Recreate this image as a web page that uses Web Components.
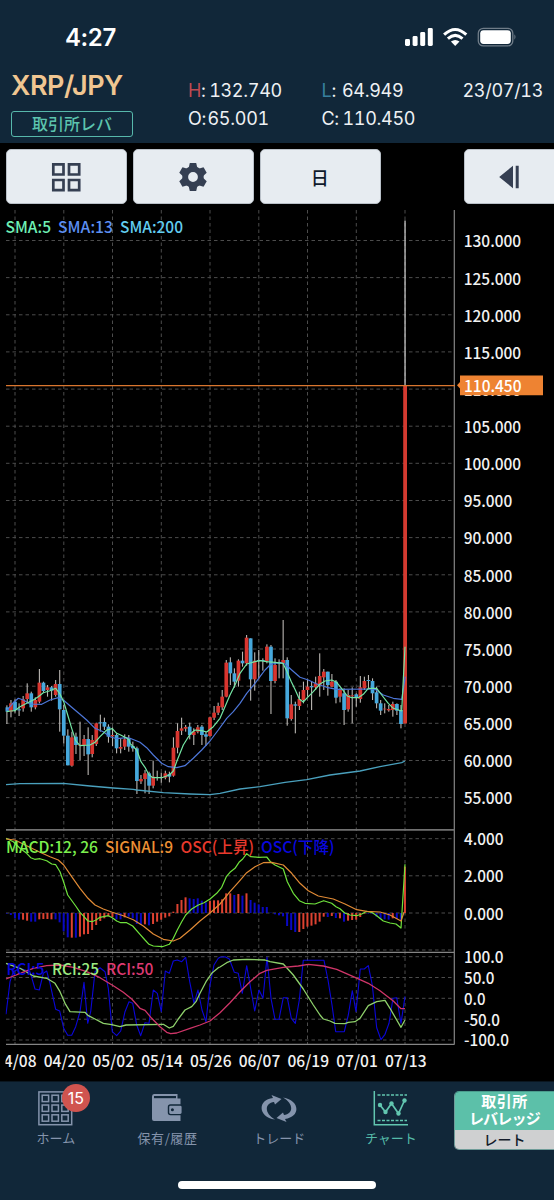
<!DOCTYPE html>
<html lang="ja">
<head>
<meta charset="utf-8">
<title>XRP/JPY</title>
<style>
  html, body { margin: 0; background: #000; }
  body { width: 554px; height: 1200px; overflow: hidden; font-family: Inter, "Noto Sans CJK JP", sans-serif; }
</style>
</head>
<body>
<trade-app></trade-app>

<script>
class StatusBar extends HTMLElement {
  constructor() {
    super();
    this.attachShadow({ mode: 'open' });
    this.shadowRoot.innerHTML = `
      <style>
        :host { display: flex; justify-content: space-between; align-items: center; height: 74px; padding: 0 37px 0 65px; box-sizing: border-box; color: #fff; }
        .time { font-size: 24px; font-weight: 600; line-height: 28px; letter-spacing: -0.4px; padding-top: 2px; }
        .icons { display: flex; align-items: center; }
        svg { display: block; }
      </style>
      <span class="time"><slot></slot></span>
      <span class="icons">
        <svg width="112" height="22" viewBox="0 0 112 22">
          <g fill="#fff">
            <rect x="0" y="13" width="5" height="7" rx="1.4"/>
            <rect x="7.6" y="10" width="5" height="10" rx="1.4"/>
            <rect x="15.2" y="6" width="5" height="14" rx="1.4"/>
            <rect x="22.8" y="2" width="5" height="18" rx="1.4"/>
            <path d="M50.2 20 L45.9 15.6 Q50.2 12.4 54.5 15.6 Z"/>
          </g>
          <g fill="none" stroke="#fff" stroke-width="3">
            <path d="M39.1 8.7 Q50.2 -1.7 61.3 8.7"/>
            <path d="M42.9 12.6 Q50.2 6.1 57.5 12.6"/>
          </g>
          <rect x="73.3" y="2.3" width="34.5" height="17.6" rx="5" fill="none" stroke="#6f7c88" stroke-width="1.3"/>
          <rect x="75.2" y="4.2" width="30.6" height="13.8" rx="3.4" fill="#fff"/>
          <path d="M109.4 8.3 Q111.6 11 109.4 13.8 Z" fill="#6f7c88"/>
        </svg>
      </span>
    `;
  }
}
customElements.define('status-bar', StatusBar);

class QuoteHeader extends HTMLElement {
  constructor() {
    super();
    this.attachShadow({ mode: 'open' });
    this.shadowRoot.innerHTML = `
      <style>
        :host { display: flex; height: 69px; color: #eef1f4; }
        .pair { width: 188px; padding-left: 11px; box-sizing: border-box; }
        .name { display: block; color: #f0c691; font-size: 27px; font-weight: 600; line-height: 24px; letter-spacing: -0.5px; }
        .kind { display: block; margin-top: 13px; width: 122px; height: 26px; box-sizing: border-box; border: 1.5px solid #57b8ab; border-radius: 3px;
          color: #5cc4ae; font: 500 16px/23px "Noto Sans CJK JP", sans-serif; text-align: center; }
        .col { font-size: 18px; line-height: 27.5px; padding-top: 3px; white-space: nowrap; letter-spacing: -0.3px; font-feature-settings: "tnum"; }
        .hi { width: 133.5px; }
        .lo { width: 141px; }
        .col div { height: 27.5px; }
        .h { color: #bd4a52; }
        .l { color: #37809f; }
        .sp { margin-left: 3.5px; }
      </style>
      <div class="pair"><span class="name">XRP/JPY</span><span class="kind">取引所レバ</span></div>
      <div class="col hi"><div><span class="h">H</span>:<span class="sp">132.740</span></div><div>O:<span style="margin-left:1.5px">65.001</span></div></div>
      <div class="col lo"><div><span class="l">L</span>:<span style="margin-left:6px">64.949</span></div><div>C:<span class="sp">110.450</span></div></div>
      <div class="col"><div>23/07/13</div></div>
    `;
  }
}
customElements.define('quote-header', QuoteHeader);

class ToolButton extends HTMLElement {
  constructor() {
    super();
    this.attachShadow({ mode: 'open' });
    this.shadowRoot.innerHTML = `
      <style>
        :host { display: flex; align-items: center; justify-content: center; width: 121px; height: 55px; padding-right: 1.5px; box-sizing: border-box; flex: none;
          background: #e7ecf1; border: 1px solid #b9c0c8; border-radius: 5px; color: #0f1a2c; font: 500 18px/24px "Noto Sans CJK JP", sans-serif; }
      </style>
      <slot></slot>
    `;
  }
}
customElements.define('tool-button', ToolButton);

// Series below are stored in thirds of a pixel, relative to the block origin.
const STEP = 4.0625;
const FIRST_X = 6.9;
const dayX = i => FIRST_X + i * STEP;

// colour, high, body top, body bottom, low
const CANDLES = [
  { y: 620, rows: `b 256 262 275 312|r 240 250 275 292|b 238 245 270 278|b 250 268 271 288|r 228 238 265 275|r 190 220 237 250|b 215 220 262 275|r 232 240 262 268|r 147 188 245 250|b 185 188 213 218|r 195 202 210 230|b 198 202 212 242|r 180 192 225 230|b 150 192 268 335|b 255 270 347 370|b 328 347 436 436|r 335 352 437 440|b 338 350 375 402|r 305 374 377 420|r 345 357 375 408|b 322 357 403 465|r 345 360 402 412|r 308 310 372 378|b 284 307 310 335|b 293 306 320 330|b 313 320 350 368|r 322 345 349 378|b 340 345 385 400|r 355 381 386 400|r 343 358 380 390|b 345 355 380 395|b 365 378 385 395|b 380 385 483 522|r 465 477 484 492|r 450 460 477 520|b 455 460 497 522|r 422 470 497 505|b 452 471 474 482|r 458 471 474 488|r 452 460 473 478|b 455 462 470 487|r 352 383 467 470|r 310 333 383 400|r 293 325 332 345|r 315 321 326 335|b 308 320 345 358|r 325 335 345 375|r 315 322 335 340|b 315 320 345 375|b 335 343 350 378|r 290 292 348 350|r 258 278 293 300|r 248 258 278 285|r 210 230 262 270|r 120 128 230 232|b 112 127 160 195|b 145 160 185 203|r 118 122 182 200|b 95 122 130 140|r 45 53 130 137|b 55 55 178 242|r 97 122 178 212|b 90 120 123 175|b 115 120 123 152` },
  { y: 600, rows: `r 133 140 183 190|b 135 140 243 342|r 175 195 243 250|b 178 188 191 235|r 60 180 190 235|b 172 180 355 377|r 285 313 357 362|b 305 313 317 400|r 275 297 318 330|r 245 270 300 310|r 240 260 270 290|b 243 258 262 330|r 230 250 262 270|r 160 228 255 290|r 207 215 232 270|b 215 215 255 287|r 222 245 260 262|b 240 245 293 310|r 265 270 290 307|b 265 280 330 375|r 270 285 328 335|r 262 286 289 370|b 280 283 292 320|r 228 262 297 308|r 230 243 265 270|b 225 240 243 268|b 235 243 280 300|b 260 277 310 325|b 300 310 332 345|r 310 326 328 340|r 315 327 331 335|r 305 312 330 350|b 310 312 332 345|b 315 330 372 385` }
];

const LINES = [
  { color: '#4aa0bd', width: 1.3, parts: [
    [0, 620, '18,494 60,491 190,490 270,498 340,504 400,508'],
    [130, 620, '20,510 100,518 180,522 240,524 270,520 330,507'],
    [260, 600, '0,560 75,547 140,539 210,525 300,513 360,500 425,488 435,483']] },
  { color: '#4d76d8', width: 1.2, parts: [
    [0, 620, '20,272 40,248 55,235 70,240 90,252 125,253 150,240 175,233 190,240 215,262 240,283 260,300 285,325 310,335 330,350 350,356 380,353'],
    [130, 620, '0,355 30,367 50,383 70,405 95,430 115,440 140,443 165,437 190,415 215,390 240,363 265,330 290,295 310,275 330,250 350,220 375,190'],
    [260, 600, '0,230 15,210 30,195 45,190 60,187 75,192 95,210 120,232 145,240 170,252 200,262 230,268 320,267 345,268 370,285 400,295 425,298 436,230']] },
  { color: '#74e6a4', width: 1.2, parts: [
    [0, 620, '20,275 32,273 44,272 60,260 80,250 100,240 115,230 130,218 150,212 167,205 180,222 191,245 203,285 215,325 227,362 240,377 270,375 285,367 300,350 320,330 337,326 350,340 362,345 386,358'],
    [130, 620, '0,370 20,390 33,425 45,442 57,465 69,473 95,473 118,465 130,453 142,420 160,375 180,343 195,330 215,332 230,336 250,320 270,295 285,260 300,225 315,195 330,160 350,132 375,125'],
    [260, 600, '0,182 20,185 45,187 69,190 81,215 94,245 106,270 118,297 130,306 142,293 160,275 180,252 195,243 215,240 230,247 250,272 262,288 275,293 295,293 310,283 325,265 350,265 365,285 385,310 400,325 425,333 435,140']] }
];

const MACD_LINES = [
  { color: '#6fe23c', width: 1.2, parts: [
    [0, 825, '18,40 40,50 60,70 80,85 92,98 104,103 120,101 140,107 155,117 167,119 180,140 191,172 203,210 227,243 240,262 252,275 264,288 276,290 288,285 300,277 325,272 337,278 350,288 362,293 380,293 398,303 420,328 435,345 447,358 460,363 487,365 508,358 520,340 532,315 545,290 557,270 575,252 595,240 612,233 630,222 650,205 665,187'],
    [220, 825, '19,155 30,142 45,130 57,112 68,102 80,86 92,95 116,97 140,96 153,112 165,120 190,132 202,170 220,205 238,227 255,235 285,237 311,227 335,235 348,245 360,251 374,264 390,270 410,272 425,267 440,259 455,262 470,272 490,288 510,294 528,297 543,309 555,118']] },
  { color: '#e08a35', width: 1.2, parts: [
    [0, 825, '18,42 45,45 80,62 120,82 150,95 175,105 191,120 215,155 240,190 264,220 285,240 310,252 337,262 370,272 400,284 430,303 460,327 490,343 520,348 540,340 570,315 600,288 630,264 660,237'],
    [220, 825, '30,200 55,172 80,143 105,125 130,113 155,112 190,120 215,145 240,175 265,197 295,213 340,222 375,237 410,254 440,259 480,261 510,270 543,288 552,262']] }
];

const RCI_LINES = [
  { color: '#0b06d8', width: 1.1, parts: [
    [0, 945, '18,208 30,110 40,80 60,70 90,80 105,132 118,135 130,85 140,78 150,115 167,193 179,198 191,250 203,271 215,271 227,245 240,200 252,112 263,235 272,200 285,80 300,68 315,80 325,130 337,260 350,272 362,258 375,200 387,170 398,175 410,240 422,272 435,233 447,235 460,135 472,145 484,200 496,78 508,85 520,48 532,45 545,50 557,37 569,110 582,175 594,135 606,195 618,230 630,120 642,60 655,40'],
    [220, 945, '0,37 15,35 28,42 43,82 55,85 67,145 80,62 92,130 104,198 117,135 129,160 141,37 153,160 165,223 177,223 190,158 202,158 214,220 226,235 238,165 250,46 312,46 324,105 336,180 347,260 373,260 385,210 397,137 408,200 421,72 433,72 445,62 457,120 470,248 483,284 495,268 507,235 519,160 530,158 543,235 555,155']] },
  { color: '#8ed06b', width: 1.3, parts: [
    [0, 945, '18,55 60,70 100,93 140,100 165,115 180,140 195,175 210,200 255,202 265,212 285,222 310,235 335,239 360,245 378,240 490,238 508,249 520,244 535,222 555,195 575,185 588,170 600,145 618,110 635,85 655,68'],
    [220, 945, '0,66 20,53 40,45 80,43 135,45 150,50 190,57 220,90 250,132 280,180 300,210 310,222 330,228 345,235 375,236 385,232 405,230 420,220 445,182 470,170 495,166 510,190 530,225 543,247 555,225']] },
  { color: '#cf3568', width: 1.3, parts: [
    [0, 945, '18,102 60,85 100,70 140,62 180,60 220,67 260,80 300,98 340,122 370,142 395,162 420,190 435,196 455,220 480,245 500,262 512,266 530,264 570,250 600,240 630,228'],
    [220, 945, '0,203 30,173 60,140 90,110 120,85 140,76 190,67 235,63 265,58 310,63 350,73 400,95 445,115 480,137 520,168 543,191 555,191']] }
];

// One entry per day: colour and bar end.
const OSC = 'b266 b270 b280 b284 r284 r287 b290 b290 r283 r282 r282 r283 b283 b292 b319 b337 r338 b338 r335 r328 r327 r315 r300 r288 r280 r274 r276 b283 b283 r277 b275 b280 b297 b300 r298 b301 r297 r290 r284 r278 r274 r260 r237 r225 r217 b220 b222 b220 b227 b232 r228 r226 r226 r223 r205 r205 b210 r207 b212 r205 b225 b233 b238 b246 b246 b263 b268 b271 b274 b303 b315 b321 r321 r312 r305 r302 r298 r290 r275 b276 r273 b279 r280 b290 r287 r285 r284 r276 r266 b266 b267 b275 b282 b283 b284 r280 b282 b286 r125'.split(' ');

class PriceChart extends HTMLElement {
  constructor() {
    super();
    this.attachShadow({ mode: 'open' });
  }

  connectedCallback() {
    this.render();
  }

  lines(list) {
    return list.map(l => {
      const pts = l.parts.flatMap(([ox, oy, s]) => s.split(' ').map(p => {
        const [x, y] = p.split(',').map(Number);
        return (ox + x / 3).toFixed(1) + ',' + (oy + y / 3).toFixed(1);
      }));
      return `<polyline points="${pts.join(' ')}" stroke="${l.color}" stroke-width="${l.width}" fill="none" stroke-linejoin="round"/>`;
    }).join('');
  }

  candles() {
    let i = 0;
    let out = '';
    for (const block of CANDLES) {
      for (const row of block.rows.split('|')) {
        const [c, ...v] = row.split(' ');
        const [hi, top, bottom, lo] = v.map(n => block.y + n / 3);
        const x = dayX(i++);
        out += `<rect x="${x - 0.55}" y="${hi}" width="1.1" height="${lo - hi}" fill="#b9b6b2"/>`;
        out += `<rect x="${x - 1.85}" y="${top}" width="3.7" height="${bottom - top}" fill="${c === 'r' ? '#d8352f' : '#46a8dc'}"/>`;
      }
    }
    return out + `<rect x="404.4" y="220.5" width="1.3" height="165" fill="#c4c4c4"/><rect x="403.2" y="385.5" width="3.8" height="338" fill="#d33a30"/>`;
  }

  osc() {
    return OSC.map((o, i) => {
      const end = 825 + Number(o.slice(1)) / 3;
      return `<rect x="${dayX(i) - 1.1}" y="${Math.min(913, end)}" width="2" height="${Math.abs(end - 913)}" fill="${o[0] === 'r' ? '#dd4231' : '#0a08c4'}"/>`;
    }).join('');
  }

  grid() {
    const rows = [];
    for (let k = 0; k <= 15; k++) rows.push(240.5 + k * 37.14);
    rows.push(838.7, 875.8, 913, 950, 956.7, 977.5, 998.3, 1019.2, 1040);
    let d = rows.map(y => `M6 ${y.toFixed(1)}H453`).join('');
    for (let k = 0; k < 9; k++) d += `M${(15 + k * 48.75).toFixed(1)} 210V1044`;
    return `<path d="${d}" stroke="#4c4c4c" stroke-width="1" stroke-dasharray="3.5 3" fill="none"/>`;
  }

  labels() {
    let out = '';
    const add = (x, y, w, text, fill = '#f2f2f2') => {
      out += `<text x="${x}" y="${y.toFixed(1)}" textLength="${w}" lengthAdjust="spacingAndGlyphs" fill="${fill}">${text}</text>`;
    };
    for (let k = 0; k <= 15; k++) {
      const p = 130 - k * 5;
      add(463.7, 247.4 + k * 37.12, p >= 100 ? 57.5 : 48.5, p.toFixed(3));
    }
    ['4.000', '2.000', '0.000'].forEach((t, k) => add(464, 845.3 + k * 37.1, 39.5, t));
    [['100.0', 39.5], ['50.0', 30.5], ['0.0', 21.5], ['-50.0', 36], ['-100.0', 45]].forEach(([t, w], k) => add(464, 963.2 + k * 20.8, w, t));
    add(5.5, 233, 45.5, 'SMA:5', '#6eefb4');
    add(58, 233, 55, 'SMA:13', '#5c8ff2');
    add(120, 233, 63, 'SMA:200', '#62cdf0');
    add(6, 852.8, 92, 'MACD:12, 26', '#7cf04e');
    add(105, 852.8, 68, 'SIGNAL:9', '#ec9035');
    add(180.5, 852.8, 73.5, 'OSC(上昇)', '#e8392c');
    add(261, 852.8, 73.5, 'OSC(下降)', '#0907dd');
    add(6.5, 975, 38, 'RCI:5', '#0907dd');
    add(52, 975, 47, 'RCI:25', '#9dec82');
    add(106, 975, 47.5, 'RCI:50', '#dd3a72');
    return out;
  }

  dates() {
    const days = ['04/08', '04/20', '05/02', '05/14', '05/26', '06/07', '06/19', '07/01', '07/13'];
    return days.map((t, k) => `<text x="${-5 + k * 48.75}" y="1066.8" textLength="41.5" lengthAdjust="spacingAndGlyphs" fill="#f2f2f2">${t}</text>`).join('');
  }

  render() {
    this.shadowRoot.innerHTML = `
      <style>
        :host { display: block; height: 871px; background: #000; }
        svg { display: block; font: 500 16px "Noto Sans CJK JP", sans-serif; }
      </style>
      <svg width="554" height="871" viewBox="0 210 554 871">
        <clipPath id="plot"><rect x="5.5" y="210" width="449" height="871"/></clipPath>
        ${this.grid()}
        <g clip-path="url(#plot)">
          ${this.candles()}
          ${this.lines(LINES)}
          ${this.osc()}
          ${this.lines(MACD_LINES)}
          ${this.lines(RCI_LINES)}
          ${this.dates()}
        </g>
        <path d="M454.3 210V1044.5M6 952.4H454.5M6 1044.3H454.5" stroke="#858585" stroke-width="1.2" fill="none"/>
        <path d="M6 829.9H454.5" stroke="#707070" stroke-width="1.7"/>
        <path d="M6 385.6H455" stroke="#d9762f" stroke-width="1.3"/>
        ${this.labels()}
        <path d="M457 385.2L460 382V375.5H543V395.2H460V388.4Z" fill="#ee8332"/>
        <text x="464" y="391.9" textLength="57.5" lengthAdjust="spacingAndGlyphs" fill="#fff">110.450</text>
      </svg>
    `;
  }
}
customElements.define('price-chart', PriceChart);

class TabItem extends HTMLElement {
  constructor() {
    super();
    this.attachShadow({ mode: 'open' });
    const badge = this.getAttribute('badge');
    this.shadowRoot.innerHTML = `
      <style>
        :host { display: flex; flex-direction: column; align-items: center; width: 111.7px; flex: none; color: #8594ac; }
        :host([active]) { color: #55baa8; }
        .icon { position: relative; height: 35px; }
        .badge { position: absolute; left: 23.5px; top: -7px; width: 28px; height: 28px; border-radius: 50%; background: #d0544f; color: #fff;
          font: 400 16px/28px Inter, sans-serif; text-align: center; }
        .label { margin-top: 2px; font: 400 13px/20px "Noto Sans CJK JP", sans-serif; white-space: nowrap; }
        .label.wide { letter-spacing: 0.6px; }
      </style>
      <span class="icon"><slot name="icon"></slot>${badge ? `<span class="badge">${badge}</span>` : ''}</span>
      <span class="label${this.hasAttribute('wide') ? ' wide' : ''}"><slot></slot></span>
    `;
  }
}

class RateButton extends HTMLElement {
  constructor() {
    super();
    this.attachShadow({ mode: 'open' });
    this.shadowRoot.innerHTML = `
      <style>
        :host { display: block; width: 110px; height: 59px; flex: none; border-radius: 5px; overflow: hidden; box-sizing: border-box; border: 1px solid #6f9c99; border-top-color: #4b9c8d; }
        .top { display: flex; flex-direction: column; align-items: center; height: 38px; padding: 0 9px 0 0; box-sizing: border-box; background: #5cc0a9; color: #fff; font: 700 15px/17px "Noto Sans CJK JP", sans-serif; letter-spacing: 0.4px; }
        .bottom { height: 20px; padding-right: 9px; background: #cfd0d1; color: #121b2a; text-align: center; font: 500 14px/18px "Noto Sans CJK JP", sans-serif; }
      </style>
      <div class="top"><span>取引所</span><span style="letter-spacing:-0.8px">レバレッジ</span></div>
      <div class="bottom">レート</div>
    `;
  }
}
customElements.define('rate-button', RateButton);

class TradeApp extends HTMLElement {
  constructor() {
    super();
    this.attachShadow({ mode: 'open' });
    const squares = [0, 1, 2].flatMap(r => [0, 1, 2].map(c => `<rect x="${4.2 + c * 9.8}" y="${4.2 + r * 9.8}" width="6.4" height="6.4"/>`)).join('');
    // gear teeth are six copies of one tooth
    const teeth = [0, 60, 120, 180, 240, 300].map(a => `<path d="M-3.2 -14H3.2L4.6 -8H-4.6Z" transform="rotate(${a})"/>`).join('');
    const swirl = 'M14 28.5C-3 26 -4 9 12 7L10.5 4L20.5 8L14 13.5L13 11C4 12 2.5 22 14 28.5Z';
    this.shadowRoot.innerHTML = `
      <style>
        :host { display: flex; flex-direction: column; width: 554px; height: 1200px; overflow: hidden; }
        header { background: #112739; height: 143px; }
        .tools { display: flex; gap: 6px; padding: 6px 0 6px 6px; height: 55px; background: #000; }
        .tools tool-button:last-child { margin-left: 77px; }
        .tools svg { display: block; }
        footer { background: #112739; height: 119px; border-top: 1px solid #0a1620; box-sizing: border-box; }
        nav { display: flex; height: 99px; padding-top: 9px; box-sizing: border-box; }
        nav rate-button { margin-left: 7.2px; }
        nav svg { display: block; }
        .home { width: 198px; height: 8px; border-radius: 4px; background: #fff; margin: 0 auto; }
      </style>
      <header>
        <status-bar>4:27</status-bar>
        <quote-header></quote-header>
      </header>
      <div class="tools">
        <tool-button>
          <svg width="30" height="30" viewBox="0 0 30 30" fill="none" stroke="#353f52" stroke-width="2.7"><path d="M2.3 2.3h10.2v10.2H2.3zM18 2.3h10.2v10.2H18zM2.3 18h10.2v10.2H2.3zM18 18h10.2v10.2H18z"/></svg>
        </tool-button>
        <tool-button>
          <svg width="30" height="30" viewBox="-15 -15 30 30" fill="#353f52">${teeth}<circle r="7.8" fill="none" stroke="#353f52" stroke-width="5.8"/></svg>
        </tool-button>
        <tool-button>日</tool-button>
        <tool-button>
          <svg width="60" height="24" viewBox="9 0 60 24" fill="#353f52"><path d="M14.2 12L28 0.8V23.2ZM30.7 0.8H33.7V23.2H30.7Z"/></svg>
        </tool-button>
      </div>
      <price-chart></price-chart>
      <footer>
        <nav>
          <tab-item badge="15">
            <svg slot="icon" width="35" height="35" viewBox="0 0 35 35" fill="none" stroke="#8594ac" stroke-width="1.5"><rect x="0.9" y="0.9" width="32.8" height="32.8"/>${squares}</svg>
            ホーム
          </tab-item>
          <tab-item wide>
            <svg slot="icon" width="33" height="35" viewBox="0 0 33 35">
              <path d="M1 5.5Q1 3 3 3H26.5V7.5H29.5V30H3Q1 30 1 28Z" fill="#8594ac"/>
              <path d="M3 5H25V7.2H3Z" fill="#112739"/>
              <rect x="17.5" y="14" width="13.8" height="9.6" rx="2" fill="#8594ac" stroke="#112739" stroke-width="1.4"/>
              <circle cx="21.4" cy="18.8" r="1.5" fill="#112739"/>
            </svg>
            保有/履歴
          </tab-item>
          <tab-item>
            <svg slot="icon" width="36" height="35" viewBox="0 0 36 35" fill="#8594ac">
              <path d="${swirl}"/>
              <path transform="rotate(180 18 17.5)" d="${swirl}"/>
            </svg>
            トレード
          </tab-item>
          <tab-item active>
            <svg slot="icon" width="36" height="35" viewBox="0 0 36 35" fill="none" stroke="#62c6b0" stroke-width="1.5">
              <path d="M1.3 0V33.7H35"/>
              <path d="M4.5 4H34M4.5 29.5H34" stroke-dasharray="3 1.5"/>
              <path d="M7 14L12.5 21L18.5 12.5L25.5 22.5L31.5 9.5" stroke-width="1.7"/>
              <g fill="#62c6b0" stroke="none"><circle cx="7" cy="14" r="2.2"/><circle cx="12.5" cy="21" r="2.2"/><circle cx="18.5" cy="12.5" r="2.2"/><circle cx="25.5" cy="22.5" r="2.2"/><circle cx="31.5" cy="9.5" r="2.2"/></g>
            </svg>
            チャート
          </tab-item>
          <rate-button></rate-button>
        </nav>
        <div class="home"></div>
      </footer>
    `;
  }
}
customElements.define('tab-item', TabItem);
customElements.define('trade-app', TradeApp);
</script>
</body>
</html>
